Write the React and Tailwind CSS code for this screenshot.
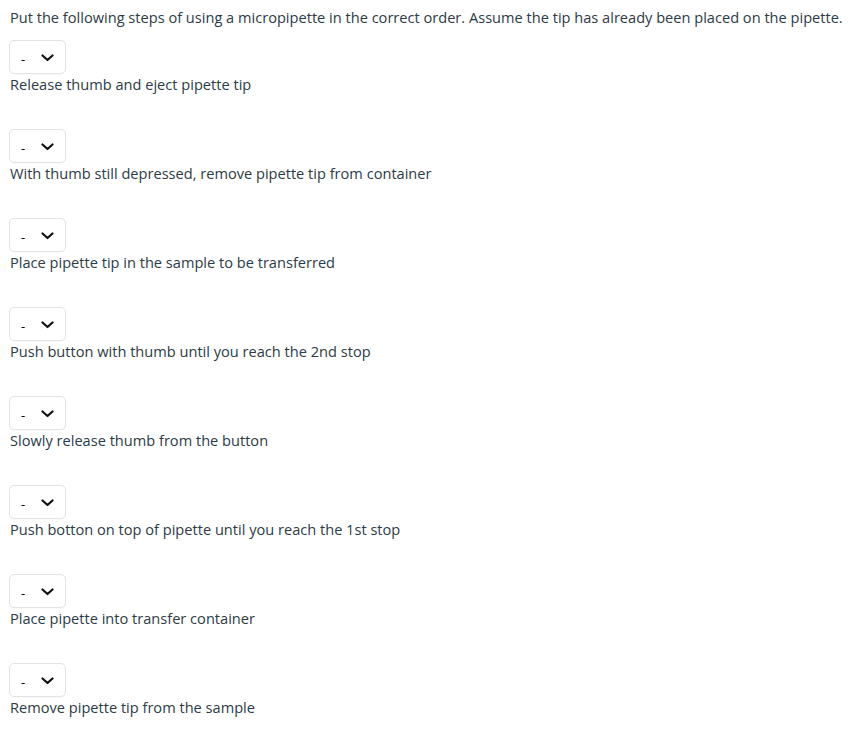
import React from 'react'

const steps = [
    'Release thumb and eject pipette tip',
    'With thumb still depressed, remove pipette tip from container',
    'Place pipette tip in the sample to be transferred',
    'Push button with thumb until you reach the 2nd stop',
    'Slowly release thumb from the button',
    'Push botton on top of pipette until you reach the 1st stop',
    'Place pipette into transfer container',
    'Remove pipette tip from the sample',
]

function Dropdown() {
    return (
        <div className="w-[57px] h-[34px] border border-[#e3e3e3] rounded-[5px] bg-white flex items-center pl-[11px] pr-[8px] shadow-[0_1px_1px_rgba(0,0,0,0.02)]">
            <span className="text-[13px] text-black leading-none mt-[4px]">-</span>
            <svg className="ml-[16px] mt-[2px]" width="13" height="8" viewBox="0 0 13 8" fill="none">
                <path d="M1.5 1.5 L6.5 6 L11.5 1.5" stroke="#111" strokeWidth="2.2" strokeLinecap="round" strokeLinejoin="round" />
            </svg>
        </div>
    )
}

export default function App() {
    return (
        <div className="bg-white min-h-screen pl-[10px] pt-[7px] text-[14.6px] leading-[20px] text-[#2d3b45]" style={{ fontFamily: '"Open Sans", "Liberation Sans", sans-serif' }}>
            <p>Put the following steps of using a micropipette in the correct order. Assume the tip has already been placed on the pipette.</p>
            <div className="mt-[13px] flex flex-col gap-[35px]">
                {steps.map((s, i) => (
                    <div key={i} className="flex flex-col items-start">
                        <div className="-ml-[1px]"><Dropdown /></div>
                        <div>{s}</div>
                    </div>
                ))}
            </div>
        </div>
    )
}
